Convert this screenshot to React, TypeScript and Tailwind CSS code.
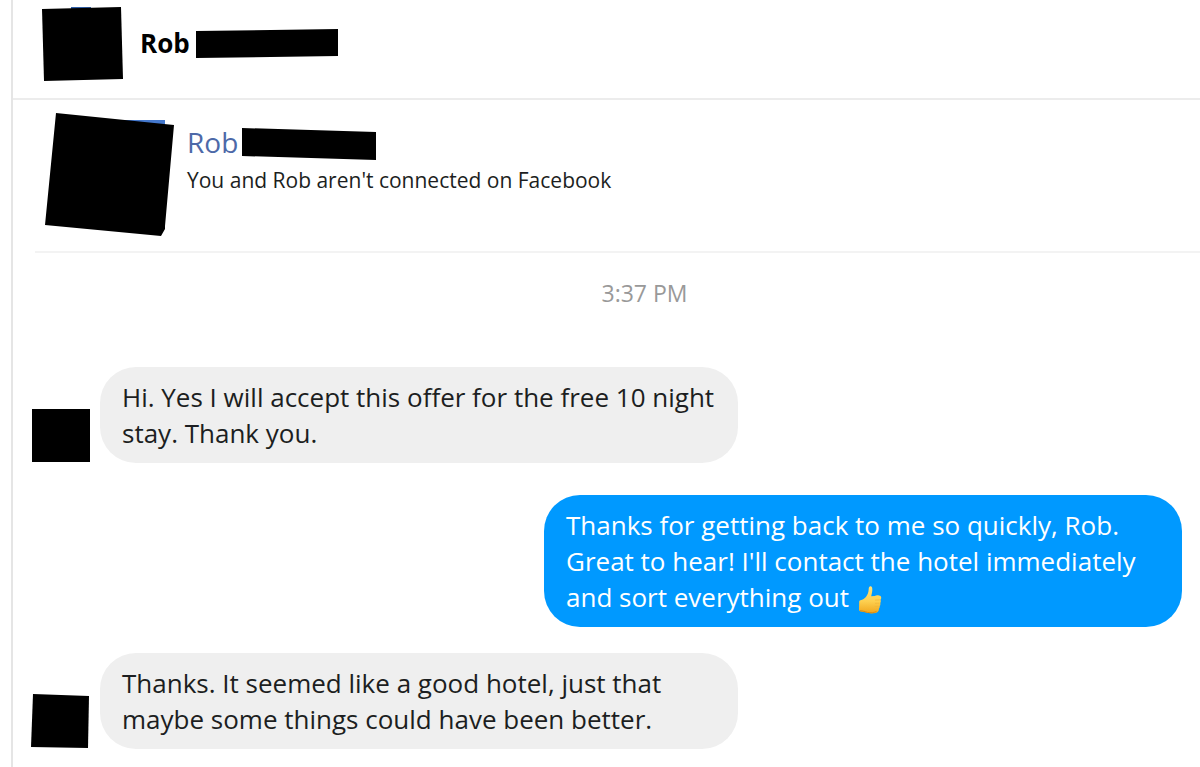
import type { ReactNode } from "react";

function Shape({ className, width, height, children }: { className?: string; width: number; height: number; children: ReactNode }) {
  return (
    <svg aria-hidden="true" className={`shrink-0 ${className ?? ""}`} width={width} height={height} viewBox={`0 0 ${width} ${height}`}>
      {children}
    </svg>
  );
}

function ThumbsUp() {
  return (
    <svg role="img" aria-label="Thumbs up" className="ml-0.5 inline-block align-text-bottom" width="24" height="30" viewBox="0 0 24 30">
      <defs>
        <linearGradient id="thumb" x1="0" y1="0" x2="0" y2="1">
          <stop offset="0" stopColor="#ffe27a" />
          <stop offset="0.55" stopColor="#fdd050" />
          <stop offset="1" stopColor="#f0a51c" />
        </linearGradient>
      </defs>
      <path
        d="M11.2 2c.8-1.300 2.700-.9 3 1 .4 2.700-.3 5.200-1 8.200l3.600-.1c1-.9 2.800-.8 4.200-.6 1.500.2 2.400 1.200 2.200 2.500 0 .8-.3 1.400-.7 1.800.5 1 .4 2.300-.2 3.100.3 1.100.1 2.300-.6 3 .2 1-.1 2-.7 2.700 0 2.400-1.200 4-3.500 4.500-3 .7-6.800.5-9.300-.5-1.800-.7-3.600-1.100-5.400-1.200-1.300-.1-1.800-.8-1.800-1.900L1.200 17c0-.9.4-1.500 1.200-1.700 2.500-.7 4.200-1.800 5.500-3.300 1.800-2.200 2.600-4.500 2.800-7.800 0-.9.100-1.600.5-2.200z"
        fill="url(#thumb)"
      />
      <path d="M17 15.100l4.800-.2M17 18.300l4.400-.1M16.600 21.400l4.100-.1" stroke="#f0b436" strokeWidth="0.7" fill="none" />
      <path d="M2 25.800c3-.2 5 1 7.500 1.600 3 .6 6.900.4 9-1" stroke="#d98b12" strokeWidth="1" fill="none" />
    </svg>
  );
}

function Bubble({ own, children }: { own?: boolean; children: ReactNode }) {
  return (
    <p
      className={`max-w-[638px] rounded-[36px] py-3 pl-[22px] pr-3 text-[26px] leading-9 ${
        own ? "bg-[#0099ff] text-white" : "bg-[#efefef] text-[#1c1e21]"
      }`}
    >
      {children}
    </p>
  );
}

export default function App() {
  return (
    <div className="min-h-screen bg-white pl-[11px] font-['Open_Sans','Noto_Sans',sans-serif]">
      <div className="min-h-screen border-l-2 border-[#e5e5e5]">
        <header className="flex h-[100px] items-center border-b-2 border-[#ececec] pb-3 pl-7">
          <Shape width={83} height={76}>
            <path d="M30 2L50 2V5H30z" fill="#2f5fa8" />
            <path d="M1 4L80 2L82 74L3 76z" />
          </Shape>
          <h1 className="ml-4 text-[26px] font-bold leading-8 text-black">Rob</h1>
          <Shape className="ml-1.5" width={144} height={30}>
            <path d="M0 3L142 1V28L0 30z" />
          </Shape>
        </header>

        <main className="pl-[18px]">
          <section className="ml-1 flex h-[153px] items-start border-b-2 border-[#f3f3f3] pl-2.5 pt-3">
            <Shape width={130} height={124}>
              <path d="M78 8H120V15H78z" fill="#4478cd" />
              <path d="M11 1L129 13L120 114V117L116 124L0 113z" />
            </Shape>
            <div className="ml-3 pt-3">
              <div className="flex items-center">
                <a href="#profile" className="text-[28px] leading-8 text-[#4d69a8]">Rob</a>
                <Shape className="ml-1" width={136} height={36}>
                  <path d="M0 4L134 8V36L0 32z" />
                </Shape>
              </div>
              <p className="mt-1 text-[21px] leading-8 text-[#1c1e21]">You and Rob aren't connected on Facebook</p>
            </div>
          </section>

          <time className="mt-[22px] block pl-[58px] text-center text-[23px] leading-9 text-[#999999]">3:37 PM</time>

          <div className="mt-14">
            <div className="flex items-end">
              <Shape className="mr-2.5" width={59} height={55}>
                <path d="M1 1H59V54H1z" />
              </Shape>
              <Bubble>Hi. Yes I will accept this offer for the free 10 night stay. Thank you.</Bubble>
            </div>
            <div className="mt-8 flex justify-end pr-[18px]">
              <Bubble own>
                Thanks for getting back to me so quickly, Rob. Great to hear! I'll contact the hotel immediately and sort everything out{" "}
                <ThumbsUp />
              </Bubble>
            </div>
            <div className="mt-[26px] flex items-end">
              <Shape className="mr-2.5" width={59} height={55}>
                <path d="M2 0L58 2L57 54L0 53z" />
              </Shape>
              <Bubble>Thanks. It seemed like a good hotel, just that maybe some things could have been better.</Bubble>
            </div>
          </div>
        </main>
      </div>
    </div>
  );
}
